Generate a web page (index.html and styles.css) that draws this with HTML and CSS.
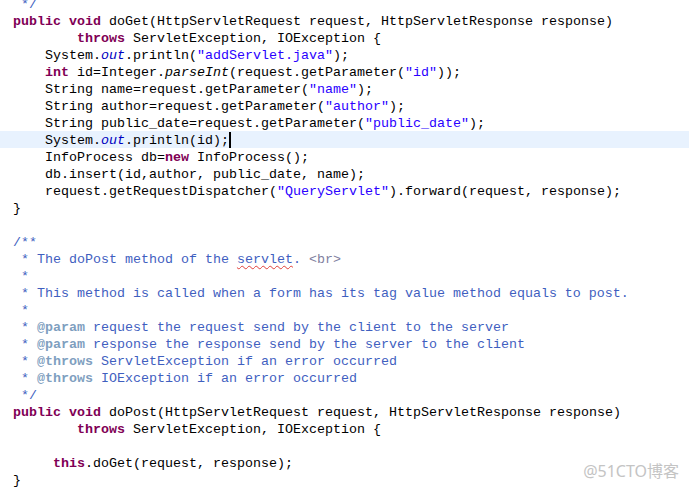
FILE: index.html
```html
<!DOCTYPE html>
<html>
<head>
<meta charset="utf-8">
<link rel="stylesheet" href="styles.css">
</head>
<body>
<div class="editor">
<div class="code">
<div class="ln"><span class="c"> */</span></div>
<div class="ln"><span class="k">public</span> <span class="k">void</span> doGet(HttpServletRequest request, HttpServletResponse response)</div>
<div class="ln">        <span class="k">throws</span> ServletException, IOException {</div>
<div class="ln">    System.<span class="f">out</span>.println(<span class="s">"addServlet.java"</span>);</div>
<div class="ln">    <span class="k">int</span> id=Integer.<span class="m">parseInt</span>(request.getParameter(<span class="s">"id"</span>));</div>
<div class="ln">    String name=request.getParameter(<span class="s">"name"</span>);</div>
<div class="ln">    String author=request.getParameter(<span class="s">"author"</span>);</div>
<div class="ln">    String public_date=request.getParameter(<span class="s">"public_date"</span>);</div>
<div class="ln cur">    System.<span class="f">out</span>.println(id);<span class="caret"></span></div>
<div class="ln">    InfoProcess db=<span class="k">new</span> InfoProcess();</div>
<div class="ln">    db.insert(id,author, public_date, name);</div>
<div class="ln">    request.getRequestDispatcher(<span class="s">"QueryServlet"</span>).forward(request, response);</div>
<div class="ln">}</div>
<div class="ln"> </div>
<div class="ln"><span class="c">/**</span></div>
<div class="ln"><span class="c"> * The doPost method of the <span class="sp">servlet</span>. <span class="h">&lt;br&gt;</span></span></div>
<div class="ln"><span class="c"> *</span></div>
<div class="ln"><span class="c"> * This method is called when a form has its tag value method equals to post.</span></div>
<div class="ln"><span class="c"> *</span></div>
<div class="ln"><span class="c"> * <span class="t">@param</span> request the request send by the client to the server</span></div>
<div class="ln"><span class="c"> * <span class="t">@param</span> response the response send by the server to the client</span></div>
<div class="ln"><span class="c"> * <span class="t">@throws</span> ServletException if an error occurred</span></div>
<div class="ln"><span class="c"> * <span class="t">@throws</span> IOException if an error occurred</span></div>
<div class="ln"><span class="c"> */</span></div>
<div class="ln"><span class="k">public</span> <span class="k">void</span> doPost(HttpServletRequest request, HttpServletResponse response)</div>
<div class="ln">        <span class="k">throws</span> ServletException, IOException {</div>
<div class="ln"> </div>
<div class="ln">     <span class="k">this</span>.doGet(request, response);</div>
<div class="ln">}</div>
</div>
<div class="watermark">@51CTO博客</div>
</div>
</body>
</html>
```
FILE: styles.css
```css
html, body {
  margin: 0;
  padding: 0;
  background: #ffffff;
  overflow: hidden;
}
.editor {
  position: relative;
  width: 689px;
  height: 489px;
  overflow: hidden;
}
.code {
  margin-top: -5px;
  font-family: "Liberation Mono", "Courier New", monospace;
  font-size: 13.333px;
  line-height: 17px;
  color: #000000;
}
.ln {
  height: 16px;
  padding-top: 1px;
  padding-left: 13px;
  white-space: pre;
}
.cur {
  background: #e8f2fe;
}
.k {
  color: #7f0055;
  font-weight: bold;
}
.s {
  color: #2a00ff;
}
.f {
  color: #0000c0;
  font-style: italic;
}
.m {
  font-style: italic;
}
.c {
  color: #3f5fbf;
}
.t {
  color: #7f9fbf;
  font-weight: bold;
}
.h {
  color: #7f7f9f;
}
.sp {
  text-decoration-line: underline;
  text-decoration-style: wavy;
  text-decoration-color: #e0403a;
  text-decoration-thickness: 1px;
  text-underline-offset: 2px;
}
.caret {
  display: inline-block;
  width: 2px;
  height: 16px;
  background: #000000;
  vertical-align: -4px;
}
.watermark {
  position: absolute;
  right: 10px;
  bottom: 7px;
  font-family: "Noto Sans", "Noto Sans CJK SC", sans-serif;
  font-size: 16px;
  color: #c4c4c4;
}
```
